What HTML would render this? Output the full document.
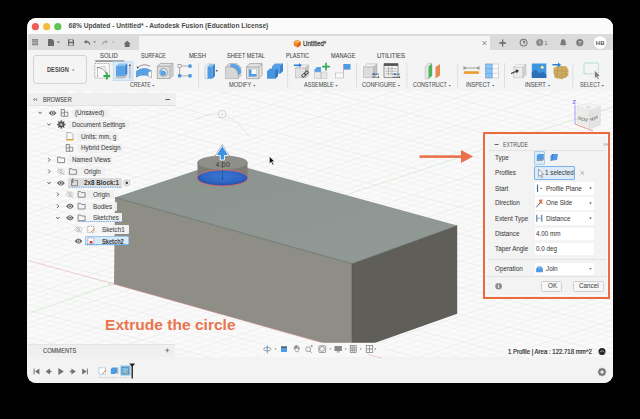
<!DOCTYPE html>
<html><head><meta charset="utf-8">
<style>
*{margin:0;padding:0;box-sizing:border-box}
html,body{width:640px;height:419px;overflow:hidden;background:#000;font-family:"Liberation Sans",sans-serif}
.a{position:absolute}
#win{position:absolute;left:27.4px;top:18.3px;width:585.2px;height:365px;border-radius:9px;overflow:hidden;background:#f3f3f3}
#pc{position:absolute;left:-27.4px;top:-18.3px;width:640px;height:419px}
.t{position:absolute;white-space:nowrap;line-height:1}
.lbl{font-size:6.3px;color:#4a4a4a;-webkit-text-stroke:0.08px #4a4a4a}
.grp{font-size:6.3px;color:#555;-webkit-text-stroke:0.08px #555}
.sep{position:absolute;top:63px;width:1px;height:25px;background:#dcdcdc}
.tree{font-size:6.2px;color:#333}
.pill{position:absolute;height:10px;background:rgba(238,238,238,0.85);border-radius:1px}
.pl{font-size:7px;color:#3d3d3d;-webkit-text-stroke:0.05px #3d3d3d;transform:scaleX(0.9);transform-origin:left}
.pp{font-size:7px;color:#3d3d3d;-webkit-text-stroke:0.05px #3d3d3d;transform:scaleX(0.9);transform-origin:left}
</style></head>
<body>
<div id="win"><div id="pc">

  <!-- TITLE -->
  <div class="a" style="left:28px;top:18px;width:585px;height:16px;background:#fbfbfb"></div>
  <div class="a" style="left:28px;top:34px;width:585px;height:16px;background:#dbdbdb"></div>
  <div class="a" style="left:139px;top:36.3px;width:350.5px;height:14px;background:#f4f4f4"></div>
  <div class="a" style="left:28px;top:50px;width:585px;height:41px;background:#f4f4f4"></div>
  <div class="t" style="left:68.5px;top:22.6px;font-size:6.66px;font-weight:bold;color:#4b4b4b">68% Updated - Untitled* - Autodesk Fusion (Education License)</div>
  <div class="t" style="left:302.6px;top:41px;font-size:6.6px;color:#505050;-webkit-text-stroke:0.3px #505050;transform:scaleX(0.93);transform-origin:left">Untitled*</div>
  <!-- toolbar tab labels -->
  <div class="t lbl" style="left:100.37px;top:52.9px;transform:scaleX(0.933);transform-origin:left">SOLID</div>
  <div class="t lbl" style="left:141.04px;top:52.9px;transform:scaleX(0.832);transform-origin:left">SURFACE</div>
  <div class="t lbl" style="left:188.54px;top:52.9px;transform:scaleX(0.928);transform-origin:left">MESH</div>
  <div class="t lbl" style="left:226.53px;top:52.9px;transform:scaleX(0.875);transform-origin:left">SHEET METAL</div>
  <div class="t lbl" style="left:286.31px;top:52.9px;transform:scaleX(0.881);transform-origin:left">PLASTIC</div>
  <div class="t lbl" style="left:331.30px;top:52.9px;transform:scaleX(0.894);transform-origin:left">MANAGE</div>
  <div class="t lbl" style="left:377.08px;top:52.9px;transform:scaleX(0.957);transform-origin:left">UTILITIES</div>
  <!-- group labels -->
  <div class="t grp" style="left:129.74px;top:82.2px;transform:scaleX(0.827);transform-origin:left">CREATE</div>
  <div class="t grp" style="left:228.64px;top:82.2px;transform:scaleX(0.913);transform-origin:left">MODIFY</div>
  <div class="t grp" style="left:303.80px;top:82.2px;transform:scaleX(0.878);transform-origin:left">ASSEMBLE</div>
  <div class="t grp" style="left:362.31px;top:82.2px;transform:scaleX(0.899);transform-origin:left">CONFIGURE</div>
  <div class="t grp" style="left:413.33px;top:82.2px;transform:scaleX(0.857);transform-origin:left">CONSTRUCT</div>
  <div class="t grp" style="left:466.30px;top:82.2px;transform:scaleX(0.88);transform-origin:left">INSPECT</div>
  <div class="t grp" style="left:525.39px;top:82.2px;transform:scaleX(0.902);transform-origin:left">INSERT</div>
  <div class="t grp" style="left:579.99px;top:82.2px;transform:scaleX(0.829);transform-origin:left">SELECT</div>
  <svg class="a" style="left:0;top:0" width="640" height="100"><g fill="#666"><path d="M152.0,84.9 L154.5,84.9 L153.2,86.4 Z"/><path d="M253.1,84.9 L255.6,84.9 L254.3,86.4 Z"/><path d="M335.3,84.9 L337.8,84.9 L336.6,86.4 Z"/><path d="M397.6,84.9 L400.1,84.9 L398.9,86.4 Z"/><path d="M448.5,84.9 L451.0,84.9 L449.8,86.4 Z"/><path d="M492.0,84.9 L494.5,84.9 L493.2,86.4 Z"/><path d="M547.8,84.9 L550.3,84.9 L549.0,86.4 Z"/><path d="M601.5,84.9 L604.0,84.9 L602.8,86.4 Z"/></g></svg>
  <!-- design button -->
  <div class="a" style="left:33.2px;top:55.3px;width:53.6px;height:29.2px;border:0.8px solid #d4d4d4;border-radius:3px;background:#f4f4f4"></div>
  <div class="t" style="left:46.8px;top:66.2px;font-size:7px;font-weight:bold;color:#4a4a4a;transform:scaleX(0.81);transform-origin:left">DESIGN</div>
  <svg class="a" style="left:0;top:0" width="100" height="100"><path d="M72.1,69.6 L74.3,69.6 L73.2,71 Z" fill="#666"/></svg>
  <svg class="a" style="left:0;top:0" width="640" height="100" viewBox="0 0 640 100">
    <!-- traffic lights -->
    <circle cx="35.4" cy="26.7" r="3.6" fill="#ec5f57"/>
    <circle cx="46.6" cy="26.7" r="3.6" fill="#f4bd3e"/>
    <circle cx="57.8" cy="26.7" r="3.6" fill="#5fc453"/>
    <!-- tabbar left icons -->
    <g fill="#6a6a6a">
      <rect x="32.2" y="39.2" width="5.8" height="6"/><path d="M32,40.8 L38.2,40.8 M32,42.3 L38.2,42.3 M32,43.8 L38.2,43.8" stroke="#dbdbdb" stroke-width="0.6"/><path d="M34.1,39 L34.1,45.4 M36.1,39 L36.1,45.4" stroke="#dbdbdb" stroke-width="0.3"/>
      <path d="M48,39 L52,39 L54,41 L54,46 L48,46 Z"/>
      <path d="M56.8,41.4 L59.8,41.4 L58.3,43.2 Z"/>
      <path d="M68,39.2 L73,39.2 L74,40.2 L74,45.8 L68,45.8 Z M69.4,39.8 L69.4,41.8 L72.6,41.8 L72.6,39.8 Z M69.2,43.2 L69.2,45.2 L72.8,45.2 L72.8,43.2 Z" fill-rule="evenodd"/>
      <path d="M123.8,43.8 L127.2,40.8 L130.6,43.8 L129.6,43.8 L129.6,47 L124.8,47 L124.8,43.8 Z"/>
    </g>
    <path d="M85.5,41.8 Q88.5,40.8 90,44.6" fill="none" stroke="#6a6a6a" stroke-width="1.1"/>
    <path d="M83.6,42.2 L86.6,39.8 L86.8,43.4 Z" fill="#6a6a6a"/>
    <path d="M93.3,41.4 L96.1,41.4 L94.7,43.1 Z" fill="#6a6a6a"/>
    <path d="M102,44.6 Q103.5,40.8 106.5,41.8" fill="none" stroke="#a9a9a9" stroke-width="1.1"/>
    <path d="M108.4,42.2 L105.4,39.8 L105.2,43.4 Z" fill="#a9a9a9"/>
    <path d="M111.7,41.4 L114.5,41.4 L113.1,43.1 Z" fill="#a9a9a9"/>
    <!-- tab cube -->
    <path d="M297.2,39.8 L300.6,41.6 L300.6,45.6 L297.2,47.4 L293.8,45.6 L293.8,41.6 Z" fill="#f08a2a"/>
    <path d="M297.2,43.4 L300.6,41.6 L300.6,45.6 L297.2,47.4 Z" fill="#d8661a"/>
    <path d="M297.2,39.8 L300.6,41.6 L297.2,43.4 L293.8,41.6 Z" fill="#f7ad5e"/>
    <!-- close x -->
    <path d="M482.6,41.2 L486.4,45 M486.4,41.2 L482.6,45" stroke="#666" stroke-width="0.8"/>
    <!-- right icons -->
    <path d="M502.6,39.6 L502.6,46.4 M499.2,43 L506,43" stroke="#666" stroke-width="1.3"/>
    <circle cx="523.6" cy="42.6" r="3.4" fill="none" stroke="#777" stroke-width="1.1"/>
    <path d="M522.5,40.6 L525.5,41 L524,44.6 Z" fill="#777"/>
    <circle cx="539.7" cy="42.6" r="3.5" fill="#8a8a8a"/>
    <path d="M539.7,40.6 L539.7,42.8 L541.4,43.6" fill="none" stroke="#dbdbdb" stroke-width="0.8"/>
    <path d="M563.2,39 Q560.6,39.4 560.8,43 L560,45 L566.4,45 L565.6,43 Q565.8,39.4 563.2,39 Z M562.3,45.5 L564.1,45.5 L563.2,46.6 Z" fill="#7a7a7a"/>
    <circle cx="579.8" cy="42.6" r="3.6" fill="#7a7a7a"/>
    <text x="579.8" y="44.9" font-size="5.6" font-weight="bold" fill="#dbdbdb" text-anchor="middle" font-family="Liberation Sans">?</text>
    <circle cx="600.1" cy="42.5" r="6.3" fill="#fff"/>
    <text x="600.2" y="44.7" font-size="6" font-weight="bold" fill="#555" text-anchor="middle" font-family="Liberation Sans">HB</text>
    <text x="544.2" y="44.8" font-size="6.2" fill="#777" font-family="Liberation Sans">1</text>
    <!-- SOLID underline -->
    <rect x="95.2" y="60.6" width="29.2" height="0.9" fill="#3a3a3a"/>
    <!-- separators -->
    <g fill="#d9d9d9">
      <rect x="198.3" y="63" width="0.8" height="24.5"/><rect x="287.3" y="63" width="0.8" height="24.5"/>
      <rect x="356" y="63" width="0.8" height="24.5"/><rect x="406.5" y="63" width="0.8" height="24.5"/>
      <rect x="457.3" y="63" width="0.8" height="24.5"/><rect x="504.2" y="63" width="0.8" height="24.5"/>
      <rect x="572.4" y="63" width="0.8" height="24.5"/>
    </g>
    <!-- CREATE icons -->
    <rect x="113.2" y="61.8" width="19.8" height="18.9" fill="#dbe9f6" stroke="#b4d3ee" stroke-width="0.6"/>
    <path d="M94.8,63.5 L109.3,63.5 L109.3,78 L94.8,78 Z" fill="#fafafa" stroke="#666" stroke-width="0.5" stroke-dasharray="1.4,0.8"/>
    <path d="M97.5,76 L97.5,67.5 L105,66.5 L106.5,74" fill="none" stroke="#888" stroke-width="0.45"/>
    <path d="M97.5,67.5 Q104,68 106.5,74" fill="none" stroke="#666" stroke-width="0.6"/>
    <circle cx="97.5" cy="67.5" r="0.6" fill="#666"/><circle cx="106.5" cy="74" r="0.6" fill="#666"/><circle cx="97.5" cy="76" r="0.6" fill="#666"/>
    <path d="M106.8,72.6 L106.8,79.4 M103.4,76 L110.2,76" stroke="#2fa84f" stroke-width="1.9"/>
    <path d="M116,66 L118.8,63.4 L127.3,63.4 L124.5,66 Z" fill="#8cc4f2"/>
    <path d="M116,66 L124.5,66 L124.5,76.2 L116,76.2 Z" fill="#5aa2e6"/>
    <path d="M124.5,66 L127.3,63.4 L127.3,73.6 L124.5,76.2 Z" fill="#3f86cf"/>
    <path d="M116,76.2 L124.5,76.2 L127.3,73.6 L127.3,75.6 L124.5,78.3 L116,78.3 Z" fill="#b9b9b9"/>
    <path d="M129.9,64.5 L129.9,78.5" stroke="#444" stroke-width="0.4"/>
    <path d="M129,66 L129.9,64 L130.8,66 Z" fill="#444"/>
    <path d="M136,71 Q143.5,65.5 151.5,70.5 L151.5,76.5 Q143.5,71.5 136,76.5 Z" fill="#5aa2e6"/>
    <path d="M136,76.5 Q143.5,71.5 151.5,76.5 L151.5,77.6 Q143.5,73 136,77.6 Z" fill="#3a80c8"/>
    <path d="M148.2,72.2 L151.5,70.5 L151.5,77.6 L148.2,76.5 Z" fill="#fff" stroke="#777" stroke-width="0.4"/>
    <path d="M137.5,67.6 Q143.5,62.8 150,66.2" fill="none" stroke="#444" stroke-width="0.55"/>
    <path d="M136.6,66.4 L137.2,68.8 L139,67.2 Z" fill="#444"/>
    <path d="M157.3,66.3 L160.5,63.4 L173,63.4 L173,75.5 L170,78.5 L157.3,78.5 Z" fill="#dedede" stroke="#777" stroke-width="0.5"/>
    <path d="M157.3,66.3 L170,66.3 L173,63.4 M170,66.3 L170,78.5" fill="none" stroke="#777" stroke-width="0.5"/>
    <path d="M170,66.3 L173,63.4 L173,75.5 L170,78.5 Z" fill="#c8c8c8"/>
    <circle cx="163.6" cy="72.4" r="4" fill="#f6f6f6" stroke="#555" stroke-width="0.5"/>
    <circle cx="163.2" cy="72.8" r="3" fill="#5aa2e6"/>
    <path d="M162.5,70.5 Q165.5,69.5 166.3,72.5" fill="none" stroke="#fff" stroke-width="0.7"/>
    <path d="M181,66 L188.5,66 M179.6,67.5 L179.6,74.3 M181,75.8 L188.5,75.8" stroke="#666" stroke-width="0.5"/>
    <rect x="178" y="64.5" width="3" height="3" fill="#fff" stroke="#666" stroke-width="0.5"/>
    <rect x="188.4" y="64.5" width="3.2" height="3.2" fill="#3f8fdc"/>
    <rect x="178" y="74.2" width="3.2" height="3.2" fill="#3f8fdc"/>
    <rect x="188.4" y="74.2" width="3.2" height="3.2" fill="#3f8fdc"/>
    <!-- MODIFY -->
    <path d="M205,66.5 L207.5,63.8 L210,63.8 L210,76 L207.5,78.8 L205,78.8 Z" fill="#f0f0f0" stroke="#999" stroke-width="0.4"/>
    <path d="M207.5,66.5 L210,63.8 L215,63.8 L212.5,66.5 Z" fill="#8cc4f2"/>
    <path d="M207.5,66.5 L212.5,66.5 L212.5,78.8 L207.5,78.8 Z" fill="#4f9ae4"/>
    <path d="M212.5,66.5 L215,63.8 L215,76 L212.5,78.8 Z" fill="#3a80c8"/>
    <path d="M214,70.8 L216.5,70.8" stroke="#aaa" stroke-width="0.6"/>
    <path d="M216.3,69.8 L218.2,70.8 L216.3,71.8 Z" fill="#333"/>
    <path d="M225.5,67 L229,63.6 L237,63.6 L241,67.5 L241,75.5 L238,78.6 L225.5,78.6 Z" fill="#d6d6d6" stroke="#888" stroke-width="0.4"/>
    <path d="M231.5,63.6 Q240.5,63.8 241.2,72.5 L238.4,75.8 Q238,67.5 229.5,66.8 Z" fill="#5aa2e6"/>
    <path d="M225.5,67 L229.5,66.8 Q238,67.5 238.4,75.8 L238,78.6" fill="none" stroke="#888" stroke-width="0.4"/>
    <path d="M246.5,67 L249.8,63.6 L262,63.6 L262,75.5 L258.8,78.6 L246.5,78.6 Z" fill="#e4e4e4" stroke="#777" stroke-width="0.5"/>
    <path d="M246.5,67 L258.8,67 L262,63.6 M258.8,67 L258.8,78.6" fill="none" stroke="#777" stroke-width="0.5"/>
    <rect x="248.5" y="69" width="8.3" height="7.8" fill="#fafafa" stroke="#999" stroke-width="0.4"/>
    <path d="M249,69.5 L251.5,69.5 L251.5,74 L256.5,74 L256.5,76.5 L249,76.5 Z" fill="#4f9ae4"/>
    <path d="M272,66.2 L275,63.4 L283,63.4 L283,71 L280,73.8 L272,73.8 Z" fill="#5aa2e6"/>
    <path d="M280,66.2 L283,63.4 L283,71 L280,73.8 Z" fill="#3a86d4"/>
    <path d="M267,71.2 L270,68.4 L278,68.4 L278,76 L275,78.8 L267,78.8 Z" fill="#4a95e0"/>
    <path d="M275,71.2 L278,68.4 L278,76 L275,78.8 Z" fill="#3478c0"/>
    <!-- ASSEMBLE -->
    <path d="M295.5,68 L298.5,65 L308.5,65 L305.5,68 Z" fill="#f2f2f2" stroke="#999" stroke-width="0.4"/>
    <path d="M295.5,68 L305.5,68 L305.5,77.8 L295.5,77.8 Z" fill="#e2e2e2" stroke="#999" stroke-width="0.4"/>
    <path d="M305.5,68 L308.5,65 L308.5,75 L305.5,77.8 Z" fill="#cacaca" stroke="#999" stroke-width="0.4"/>
    <path d="M293.8,65.2 L299.5,65.2" stroke="#2b7fd6" stroke-width="1.5"/>
    <path d="M299,63 L301.8,65.2 L299,67.4 Z" fill="#2b7fd6"/>
    <g fill="none" stroke="#222" stroke-width="0.8">
      <rect x="301.6" y="74" width="4" height="2.6" rx="1.3" transform="rotate(-40 303.6 75.3)"/>
      <rect x="304.4" y="71.5" width="4" height="2.6" rx="1.3" transform="rotate(-40 306.4 72.8)"/>
    </g>
    <path d="M314.5,69.5 L317,67 L321,67 L321,72 L314.5,72 Z" fill="#5aa2e6"/>
    <path d="M314.5,72 L321,72 L321,78.5 L314.5,78.5 Z M321,72 L327,72 L327,78.5 L321,78.5 Z" fill="#e8e8e8" stroke="#aaa" stroke-width="0.4"/>
    <path d="M326,62.8 L326,70.4 M322.2,66.6 L329.8,66.6" stroke="#2fa84f" stroke-width="1.6"/>
    <rect x="343.5" y="64" width="7" height="5.6" fill="#4f9ae4"/>
    <path d="M343.5,64 L343.5,78" stroke="#e07a8a" stroke-width="0.6"/>
    <rect x="335.8" y="73" width="7.7" height="5" fill="#fafafa" stroke="#999" stroke-width="0.4"/>
    <!-- CONFIGURE -->
    <path d="M363.5,67 L366.8,63.8 L377,63.8 L373.8,67 Z" fill="#f0f0f0" stroke="#999" stroke-width="0.4"/>
    <path d="M363.5,67 L373.8,67 L373.8,77.5 L363.5,77.5 Z" fill="#dcdcdc" stroke="#999" stroke-width="0.4"/>
    <path d="M373.8,67 L377,63.8 L377,74.3 L373.8,77.5 Z" fill="#c4c4c4" stroke="#999" stroke-width="0.4"/>
    <path d="M372,74.2 L379,74.2 M372,77.2 L379,77.2" stroke="#444" stroke-width="0.7"/>
    <path d="M378,76.2 L379.5,77.2 L378,78.2 Z" fill="#444"/>
    <circle cx="373.8" cy="74.2" r="1.1" fill="#2b7fd6"/>
    <path d="M384,63.5 L398,63.5 L398,77.5 L384,77.5 Z" fill="#f2f2f2" stroke="#555" stroke-width="0.6"/>
    <rect x="384" y="63.5" width="14" height="2.4" fill="#555"/>
    <path d="M385.5,68.7 L396.5,68.7 M385.5,71.2 L396.5,71.2 M385.5,73.7 L392,73.7 M388.5,66.5 L388.5,76 M392,66.5 L392,76" stroke="#888" stroke-width="0.5"/>
    <path d="M392.5,74.2 L400,74.2 M392.5,77.2 L400,77.2" stroke="#444" stroke-width="0.7"/>
    <path d="M399,76.2 L400.5,77.2 L399,78.2 Z" fill="#444"/>
    <circle cx="395" cy="74.2" r="1.1" fill="#2b7fd6"/>
    <!-- CONSTRUCT -->
    <path d="M425.2,66.5 L428.5,63.4 L432,63.4 L432,75.8 L428.5,78.8 L425.2,78.8 Z" fill="#e6e6e6" stroke="#999" stroke-width="0.4"/>
    <path d="M428.5,66.5 L432,63.4 L432,75.8 L428.5,78.8 Z" fill="#4cb35a"/>
    <path d="M435.5,67 L440,64 L440,75.5 L435.5,78.5 Z" fill="#e58a50"/>
    <!-- INSPECT -->
    <path d="M464.5,68 L478.5,68" stroke="#444" stroke-width="0.5"/>
    <path d="M464,66.3 L464,69.7 M479,66.3 L479,69.7" stroke="#444" stroke-width="0.6"/>
    <path d="M466,67 L464.6,68 L466,69 M477,67 L478.4,68 L477,69" fill="none" stroke="#444" stroke-width="0.4"/>
    <rect x="463.8" y="71.3" width="15.2" height="2.6" fill="#f0a030"/>
    <path d="M466,71.3 L466,72.3 M468.5,71.3 L468.5,72.3 M471,71.3 L471,72.3 M473.5,71.3 L473.5,72.3 M476,71.3 L476,72.3" stroke="#8a5a10" stroke-width="0.35"/>
    <rect x="485.6" y="64" width="13.2" height="14" fill="#fafafa" stroke="#aaa" stroke-width="0.4"/>
    <path d="M485.6,68.7 L498.8,68.7 M485.6,73.4 L498.8,73.4 M492.2,64 L492.2,78" stroke="#aaa" stroke-width="0.4"/>
    <rect x="485.6" y="64" width="6.6" height="14" fill="#8cc4f2" stroke="#3f8fdc" stroke-width="0.6" stroke-dasharray="1,0.5"/>
    <path d="M485.6,68.7 L492.2,68.7 M485.6,73.4 L492.2,73.4" stroke="#3f8fdc" stroke-width="0.4"/>
    <!-- INSERT -->
    <path d="M513.5,67.2 L516.5,64.4 L526,64.4 L523,67.2 Z" fill="#f8f8f8" stroke="#aaa" stroke-width="0.4"/>
    <path d="M513.5,67.2 L523,67.2 L523,77.6 L513.5,77.6 Z" fill="#ececec" stroke="#aaa" stroke-width="0.4"/>
    <path d="M523,67.2 L526,64.4 L526,74.8 L523,77.6 Z" fill="#d4d4d4" stroke="#aaa" stroke-width="0.4"/>
    <path d="M511,73.5 L516.5,71.2" stroke="#333" stroke-width="1.2"/>
    <path d="M515.5,69.2 L519,70.6 L516.7,73.4 Z" fill="#333"/>
    <rect x="531.8" y="63.5" width="14.5" height="14.5" fill="#3f95e0"/>
    <path d="M531.8,78 L531.8,72.5 L535.5,69.5 L539.5,73.5 L542.5,71.5 L546.3,74.5 L546.3,78 Z" fill="#2a6fb8"/>
    <circle cx="542.2" cy="67.2" r="1.5" fill="#f6f0a0"/>
    <path d="M553.5,68 L559,65.6 L566.5,66.5 L568.5,70 L568.3,76 L562,79.3 L555,78 L553.5,73 Z" fill="#cfae63"/>
    <path d="M554,70.5 L568,71.5 M554,73.5 L568,74.5 M554.5,76 L566,77 M557.5,66 L557,78.5 M562,66 L562,79 M565.5,66.5 L565.5,78" stroke="#a8884a" stroke-width="0.4"/>
    <path d="M552.5,64.8 L558.5,64.8" stroke="#2b7fd6" stroke-width="1.6"/>
    <path d="M558,62.4 L561,64.8 L558,67.2 Z" fill="#2b7fd6"/>
    <!-- SELECT -->
    <rect x="584" y="63" width="14.3" height="10.8" fill="none" stroke="#5cc06c" stroke-width="0.6" stroke-dasharray="1.2,0.9"/>
    <path d="M594.8,70.5 L594.8,78.3 L596.6,76.8 L598,79.5 L599.1,79 L597.8,76.3 L600,76.1 Z" fill="#777" stroke="#eee" stroke-width="0.4"/>
  </svg>
  <!-- VIEWPORT -->
  <div class="a" style="left:28px;top:91px;width:585px;height:266px;background:#fafafa;overflow:hidden">
    <svg class="a" style="left:-28px;top:-91px" width="640" height="419" viewBox="0 0 640 419">
      <defs>
        <pattern id="gA" patternUnits="userSpaceOnUse" width="640" height="26" patternTransform="translate(0,3) rotate(-18.45)">
          <rect x="0" y="0" width="640" height="0.6" fill="#e6e6e6"/><rect x="0" y="5.2" width="640" height="0.55" fill="#ededed"/><rect x="0" y="10.4" width="640" height="0.55" fill="#ededed"/><rect x="0" y="15.6" width="640" height="0.55" fill="#ededed"/><rect x="0" y="20.8" width="640" height="0.55" fill="#ededed"/>
        </pattern>
        <pattern id="gB" patternUnits="userSpaceOnUse" width="640" height="26" patternTransform="translate(0,7) rotate(14.5)">
          <rect x="0" y="0" width="640" height="0.6" fill="#e6e6e6"/><rect x="0" y="5.2" width="640" height="0.55" fill="#ededed"/><rect x="0" y="10.4" width="640" height="0.55" fill="#ededed"/><rect x="0" y="15.6" width="640" height="0.55" fill="#ededed"/><rect x="0" y="20.8" width="640" height="0.55" fill="#ededed"/>
        </pattern>
        <linearGradient id="topG" x1="0" y1="0" x2="1" y2="1">
          <stop offset="0" stop-color="#8a938e"/><stop offset="1" stop-color="#919a96"/>
        </linearGradient>
        <radialGradient id="blueG" cx="0.5" cy="0.4" r="0.55">
          <stop offset="0" stop-color="#3a74d2"/><stop offset="0.7" stop-color="#2f66c4"/><stop offset="1" stop-color="#2553a8"/>
        </radialGradient>
      </defs>
      <rect x="0" y="0" width="640" height="419" fill="url(#gA)"/>
      <rect x="0" y="0" width="640" height="419" fill="url(#gB)"/>
      <!-- axes -->
      <line x1="300" y1="210" x2="613" y2="106.9" stroke="#d2eccc" stroke-width="0.6"/>
      <line x1="28" y1="260.4" x2="114" y2="284" stroke="#eab4b4" stroke-width="0.6"/>
      <line x1="28" y1="314" x2="112" y2="284" stroke="#c4e8bc" stroke-width="0.6"/>
      <!-- viewcube -->
      <line x1="575" y1="104.5" x2="575" y2="124" stroke="#8888ff" stroke-width="0.8"/>
      <line x1="575" y1="124" x2="593" y2="131" stroke="#e07070" stroke-width="0.7"/>
      <path d="M577,106.2 L589,103.4 L600.5,106.5 L589.5,111 Z" fill="#f4f4f4" stroke="#dcdcdc" stroke-width="0.4"/>
      <path d="M577,106.2 L589.5,111 L589.5,129.2 L577,122.3 Z" fill="#ececec" stroke="#d8d8d8" stroke-width="0.4"/>
      <path d="M589.5,111 L600.5,106.5 L600.5,124.8 L589.5,129.2 Z" fill="#e4e4e4" stroke="#d4d4d4" stroke-width="0.4"/>
      <rect x="586.5" y="106" width="4" height="2.5" fill="#e0e0e0"/>
      <text x="577.6" y="119.6" font-size="4.6" fill="#7a7a7a" font-family="Liberation Sans" transform="rotate(14 577.6 119.6) scale(1,1)" textLength="10.5">FRONT</text>
      <text x="590.8" y="121.5" font-size="4.4" fill="#7a7a7a" font-family="Liberation Sans" transform="rotate(-24 590.8 121.5)" textLength="9">RIGHT</text>
      <line x1="570" y1="121.7" x2="613" y2="107.3" stroke="#c4e8bc" stroke-width="0.5" opacity="0.8"/>
      <text x="572.6" y="103.6" font-size="5.6" font-weight="bold" fill="#7070f0" font-family="Liberation Sans">Z</text>
      <!-- block -->
      <polygon points="115,197.5 352,263.7 352,351 114,284" fill="#8e8d86"/>
      <polygon points="352,263.7 457.2,225.6 457.2,313.8 352,351" fill="#5f5e58"/>
      <polygon points="115,197.5 223.5,161.3 457.2,225.6 352,263.7" fill="url(#topG)"/>
      <polyline points="115,197.5 352,263.7 457.2,225.6" fill="none" stroke="#5d6762" stroke-width="0.7"/>
      <line x1="352" y1="263" x2="352" y2="351" stroke="#585852" stroke-width="0.6"/>
      <line x1="114" y1="284" x2="352" y2="351" stroke="#c98a8a" stroke-width="0.6"/>
      <ellipse cx="111.5" cy="284" rx="2.6" ry="1.3" fill="#f4f4f4" stroke="#aaa" stroke-width="0.4"/>
      <!-- cylinder -->
      <path d="M197.5,162.8 L197.5,178 A25,8 0 0 0 247.5,178 L247.5,162.8 Z" fill="#7c7c75"/>
      <ellipse cx="222.5" cy="162.8" rx="25" ry="7" fill="#8f8f89" stroke="#74746e" stroke-width="0.4"/>
      <ellipse cx="222.5" cy="177.9" rx="25.4" ry="8" fill="url(#blueG)" stroke="#e06a6a" stroke-width="0.9"/>
      <line x1="222.5" y1="170" x2="222.5" y2="178" stroke="#1f4a90" stroke-width="0.6"/><circle cx="222.5" cy="178.5" r="0.9" fill="#1f4a90"/><line x1="222.3" y1="161.5" x2="222.3" y2="168" stroke="#222" stroke-width="0.5"/>
      <!-- manipulator arc -->
      <path d="M195.5,120 Q208,113 218,114" fill="none" stroke="#d8d8d8" stroke-width="0.6"/>
      <path d="M226,116 Q240,122 249,136" fill="none" stroke="#d8d8d8" stroke-width="0.6"/>
      <circle cx="222.2" cy="114.2" r="3.8" fill="none" stroke="#c8c8c8" stroke-width="0.8"/>
      <circle cx="222.2" cy="114.2" r="0.5" fill="#888"/>
      <!-- arrow -->
      <path d="M222.3,145.6 L228.6,155.5 L224.4,155.5 L224.4,160 L220.2,160 L220.2,155.5 L216,155.5 Z" fill="none" stroke="#8a8a8a" stroke-width="1.6" stroke-linejoin="miter"/><path d="M222.3,145.6 L228.6,155.5 L224.4,155.5 L224.4,160 L220.2,160 L220.2,155.5 L216,155.5 Z" fill="#3b90e2" stroke="#fff" stroke-width="0.9" stroke-linejoin="miter"/>
      <!-- cursor -->
      <path d="M269.5,156.5 L269.5,163.5 L271.2,162 L272.6,165 L273.6,164.5 L272.3,161.6 L274.5,161.5 Z" fill="#111" stroke="#fff" stroke-width="0.4"/>
      <!-- orange arrow -->
      <rect x="419.5" y="155.3" width="43" height="2.6" fill="#e9724b"/>
      <path d="M461,150 L473,156.6 L461,163 Z" fill="#e9724b"/>
    </svg>
    <div class="t" style="left:187.6px;top:70.2px;font-size:7px;color:#3a3a3a;letter-spacing:0.2px">4.00</div>
  </div>

  <!-- BROWSER -->
  <div class="a" style="left:28px;top:93.2px;width:147.5px;height:12.4px;background:#efefef;border-bottom:0.5px solid #e2e2e2"></div>
  <div class="t" style="left:43.2px;top:96.8px;font-size:6.3px;color:#4a4a4a;-webkit-text-stroke:0.1px #4a4a4a;transform:scaleX(0.88);transform-origin:left">BROWSER</div>
  <!-- pills -->
  <div class="pill" style="left:72px;top:108.5px;width:37px;height:9px"></div>
  <div class="pill" style="left:68px;top:120.2px;width:61px;height:9px"></div>
  <div class="pill" style="left:77px;top:131.9px;width:42px;height:9px"></div>
  <div class="pill" style="left:77px;top:143.6px;width:46px;height:9px"></div>
  <div class="pill" style="left:68px;top:155.3px;width:44px;height:9px"></div>
  <div class="pill" style="left:68.4px;top:167px;width:36.5px;height:9px"></div>
  <div class="pill" style="left:68.4px;top:178.2px;width:53.3px;height:9.2px;background:rgba(218,218,218,0.95)"></div>
  <div class="pill" style="left:77px;top:190px;width:37px;height:9px"></div>
  <div class="pill" style="left:77px;top:201.7px;width:39.5px;height:9px;background:rgba(242,242,242,0.92)"></div>
  <div class="pill" style="left:77px;top:213.4px;width:45.2px;height:9px;background:rgba(244,244,244,0.95)"></div>
  <div class="pill" style="left:86.2px;top:225.1px;width:43px;height:9px;background:rgba(244,244,244,0.97)"></div>
  <div class="pill" style="left:85px;top:236.4px;width:44.2px;height:8.7px;background:#d6e9f9;border:0.6px solid #9cc8ee"></div>
  <svg class="a" style="left:0;top:0" width="640" height="260" viewBox="0 0 640 260">
    <path d="M33.4,99.5 L35,98.5 M33.4,99.5 L35,100.5 M35.6,99.5 L37.2,98.5 M35.6,99.5 L37.2,100.5" stroke="#555" stroke-width="0.7" fill="none"/>
    <rect x="165.5" y="99" width="4.4" height="1" fill="#555"/>
    <g fill="none" stroke="#4a4a4a" stroke-width="0.9">
      <path d="M38.6,111.8 L40.2,113.6 L41.8,111.8"/>
      <path d="M47.4,123.5 L49,125.3 L50.6,123.5"/>
      <path d="M48.3,158 L50,159.8 L48.3,161.6"/>
      <path d="M48.3,169.7 L50,171.5 L48.3,173.3"/>
      <path d="M47.4,182 L49,183.8 L50.6,182"/>
      <path d="M57,192.6 L58.7,194.4 L57,196.2"/>
      <path d="M57,204.4 L58.7,206.2 L57,208"/>
      <path d="M56.2,217 L57.8,218.8 L59.4,217"/>
    </g>
    <!-- eyes -->
    <g><path d="M48.7,113 Q52.6,107.8 56.5,113 Q52.6,118.2 48.7,113 Z" fill="#666"/><circle cx="52.6" cy="113" r="1.7" fill="#e8e8e8"/><circle cx="52.6" cy="113" r="0.95" fill="#666"/><path d="M57.0,183 Q60.9,177.8 64.8,183 Q60.9,188.2 57.0,183 Z" fill="#666"/><circle cx="60.9" cy="183" r="1.7" fill="#e8e8e8"/><circle cx="60.9" cy="183" r="0.95" fill="#666"/><path d="M66.1,206.2 Q70.0,201.0 73.9,206.2 Q70.0,211.4 66.1,206.2 Z" fill="#666"/><circle cx="70" cy="206.2" r="1.7" fill="#e8e8e8"/><circle cx="70" cy="206.2" r="0.95" fill="#666"/><path d="M66.1,217.8 Q70.0,212.6 73.9,217.8 Q70.0,223.0 66.1,217.8 Z" fill="#666"/><circle cx="70" cy="217.8" r="1.7" fill="#e8e8e8"/><circle cx="70" cy="217.8" r="0.95" fill="#666"/><path d="M74.6,241.1 Q78.5,235.9 82.4,241.1 Q78.5,246.3 74.6,241.1 Z" fill="#666"/><circle cx="78.5" cy="241.1" r="1.7" fill="#e8e8e8"/><circle cx="78.5" cy="241.1" r="0.95" fill="#666"/></g>
    <g fill="none" stroke="#aaa" stroke-width="0.6">
      <path d="M57,171.5 Q60.9,166.5 64.8,171.5 Q60.9,176.5 57,171.5 Z M57.6,168 L64.2,175"/><circle cx="60.9" cy="171.5" r="1.2"/>
      <path d="M66.1,194.4 Q70,189.4 73.9,194.4 Q70,199.4 66.1,194.4 Z M66.7,190.9 L73.3,197.9"/><circle cx="70" cy="194.4" r="1.2"/>
      <path d="M74.6,229.5 Q78.5,224.5 82.4,229.5 Q78.5,234.5 74.6,229.5 Z M75.2,226 L81.8,233"/><circle cx="78.5" cy="229.5" r="1.2"/>
    </g>
    <!-- folders -->
    <g fill="none" stroke="#6a6a6a" stroke-width="0.75">
      <path d="M57.6,157 L60.2,157 L61,158 L64.6,158 L64.6,162.6 L57.6,162.6 Z"/>
      <path d="M69.4,168.7 L72,168.7 L72.8,169.7 L76.4,169.7 L76.4,174.3 L69.4,174.3 Z"/>
      <path d="M78.1,191.6 L80.7,191.6 L81.5,192.6 L85.1,192.6 L85.1,197.2 L78.1,197.2 Z"/>
      <path d="M78.1,203.4 L80.7,203.4 L81.5,204.4 L85.1,204.4 L85.1,209 L78.1,209 Z"/>
      <path d="M78.1,215 L80.7,215 L81.5,216 L85.1,216 L85.1,220.6 L78.1,220.6 Z"/>
      <path d="M61.2,109.5 L64.4,109.5 L64.4,116.3 L61.2,116.3 Z M61.2,112.9 L64.4,112.9 M64.4,112.2 L67.8,112.2 L67.8,116.3 L64.4,116.3"/>
      <path d="M66.2,144.5 L69.4,144.5 L69.4,151.3 L66.2,151.3 Z M66.2,147.9 L69.4,147.9 M69.4,147.2 L72.8,147.2 L72.8,151.3 L69.4,151.3"/>
    </g>
    <!-- gear -->
    <circle cx="61.3" cy="124.5" r="2.9" fill="#555"/>
    <g stroke="#555" stroke-width="1.3"><path d="M61.3,120.3 L61.3,128.7 M57.1,124.5 L65.5,124.5 M58.3,121.5 L64.3,127.5 M64.3,121.5 L58.3,127.5"/></g>
    <circle cx="61.3" cy="124.5" r="1.1" fill="#eee"/>
    <!-- units doc -->
    <path d="M66.8,132.5 L71,132.5 L73,134.5 L73,139.5 L66.8,139.5 Z" fill="#f8f8f8" stroke="#777" stroke-width="0.5"/>
    <rect x="66.3" y="139.2" width="7.2" height="1.3" fill="#e0a020"/>
    <!-- component icon block -->
    <path d="M71.5,179.5 L71.5,185.7 L77.5,185.7 L77.5,180.5 L74.5,180.5" fill="none" stroke="#555" stroke-width="0.6"/>
    <path d="M72.8,178.4 L72.8,183" stroke="#333" stroke-width="0.8"/>
    <circle cx="126.8" cy="182.9" r="3" fill="#f4f4f4" stroke="#999" stroke-width="0.5"/>
    <circle cx="126.8" cy="182.9" r="1.3" fill="#444"/>
    <!-- sketch icons -->
    <rect x="87.8" y="226.3" width="6" height="6" fill="#fff" stroke="#555" stroke-width="0.5" stroke-dasharray="1,0.6"/>
    <path d="M91,232 L94.5,228.5" stroke="#e69020" stroke-width="1"/>
    <rect x="87.8" y="237.9" width="6" height="6" fill="#fff" stroke="#555" stroke-width="0.5" stroke-dasharray="1,0.6"/>
    <rect x="89.8" y="241" width="2.6" height="2.4" fill="#d03030"/>
    <!-- dotted underlines -->
    <path d="M68.4,187.3 L121.7,187.3" stroke="#3a8ee0" stroke-width="0.8" stroke-dasharray="1,0.8"/>
    <path d="M77.5,221.5 L122.2,221.5" stroke="#3a8ee0" stroke-width="0.8" stroke-dasharray="1,0.8"/>
    <path d="M85.2,244.8 L129,244.8" stroke="#3a8ee0" stroke-width="0.8" stroke-dasharray="1,0.8"/>
  </svg>
  <div class="t pl" style="left:75.3px;top:109.3px">(Unsaved)</div>
  <div class="t pl" style="left:72.2px;top:121.0px">Document Settings</div>
  <div class="t pl" style="left:80.8px;top:132.7px">Units: mm, g</div>
  <div class="t pl" style="left:80.8px;top:144.4px">Hybrid Design</div>
  <div class="t pl" style="left:72.2px;top:156.1px">Named Views</div>
  <div class="t pl" style="left:84.2px;top:167.8px">Origin</div>
  <div class="t pl" style="left:84.2px;top:179.3px;font-weight:bold">2x8 Block:1</div>
  <div class="t pl" style="left:92.7px;top:190.9px">Origin</div>
  <div class="t pl" style="left:92.7px;top:202.6px">Bodies</div>
  <div class="t pl" style="left:92.7px;top:214.2px">Sketches</div>
  <div class="t pl" style="left:101.9px;top:225.9px">Sketch1</div>
  <div class="t pl" style="left:101.9px;top:237.5px;font-weight:bold;transform:scaleX(0.81);transform-origin:left">Sketch2</div>

  <!-- EXTRUDE PANEL -->
  <div class="a" style="left:482.8px;top:132px;width:127.4px;height:166.6px;border:2.5px solid #ec6b3c;background:#f3f3f3"></div>
  <div class="a" style="left:485.5px;top:134.5px;width:122px;height:161.5px;border:0.8px solid #fafafa"></div>
  <div class="a" style="left:489px;top:150.2px;width:117px;height:0.6px;background:#e4e4e4"></div>
  <div class="a" style="left:489px;top:258.6px;width:117px;height:0.6px;background:#e2e2e2"></div>
  <div class="a" style="left:486px;top:276.3px;width:121px;height:0.6px;background:#e2e2e2"></div>
  <div class="a" style="left:534.3px;top:151.3px;width:11.2px;height:13.4px;background:#dcebf7;border:0.6px solid #a9cdee;border-radius:1px"></div>
  <div class="a" style="left:534.3px;top:166.4px;width:40.5px;height:13.3px;background:#dcebf7;border:0.7px solid #7ab3e6;border-radius:1px"></div>
  <div class="a" style="left:534.6px;top:181.7px;width:59.4px;height:13.1px;background:#fff"></div>
  <div class="a" style="left:534.6px;top:196.8px;width:59.4px;height:13px;background:#fff"></div>
  <div class="a" style="left:534.6px;top:211.8px;width:59.4px;height:13px;background:#fff"></div>
  <div class="a" style="left:534.6px;top:227.8px;width:59.4px;height:12px;background:#fff"></div>
  <div class="a" style="left:534.6px;top:242.8px;width:59.4px;height:12px;background:#fff"></div>
  <div class="a" style="left:534.6px;top:262.9px;width:59.4px;height:12.3px;background:#fff"></div>
  <div class="a" style="left:541.3px;top:280.6px;width:20.8px;height:11.1px;background:#f7f7f7;border:0.7px solid #cfcfcf;border-radius:1.5px"></div>
  <div class="a" style="left:573.2px;top:280.6px;width:30.6px;height:11.1px;background:#f7f7f7;border:0.7px solid #cfcfcf;border-radius:1.5px"></div>
  <div class="t" style="left:502.6px;top:142px;font-size:6.3px;color:#555;transform:scaleX(0.83);transform-origin:left">EXTRUDE</div>
  <div class="t pp" style="left:495.2px;top:154.3px">Type</div>
  <div class="t pp" style="left:495.2px;top:169.2px">Profiles</div>
  <div class="t pp" style="left:495.2px;top:184.5px">Start</div>
  <div class="t pp" style="left:495.2px;top:199.4px">Direction</div>
  <div class="t pp" style="left:495.2px;top:214.6px">Extent Type</div>
  <div class="t pp" style="left:495.2px;top:229.7px">Distance</div>
  <div class="t pp" style="left:495.2px;top:245.0px">Taper Angle</div>
  <div class="t pp" style="left:495.2px;top:264.7px">Operation</div>
  <div class="t pp" style="left:544.7px;top:169.2px">1 selected</div>
  <div class="t pp" style="left:545.9px;top:184.5px">Profile Plane</div>
  <div class="t pp" style="left:545.9px;top:199.4px">One Side</div>
  <div class="t pp" style="left:545.9px;top:214.6px">Distance</div>
  <div class="t pp" style="left:535.8px;top:229.7px">4.00 mm</div>
  <div class="t pp" style="left:535.8px;top:245.0px">0.0 deg</div>
  <div class="t pp" style="left:546px;top:264.7px">Join</div>
  <div class="t pp" style="left:547.7px;top:282.3px">OK</div>
  <div class="t pp" style="left:579px;top:282.3px">Cancel</div>
  <svg class="a" style="left:0;top:0" width="640" height="300" viewBox="0 0 640 300">
    <rect x="494.6" y="144" width="4" height="0.9" fill="#555"/>
    <path d="M603.5,143.3 L605.5,144.5 L603.5,145.7 M606,143.3 L608,144.5 L606,145.7" stroke="#777" stroke-width="0.5" fill="none"/>
    <!-- type icons -->
    <path d="M536.8,155.5 L538.5,154 L543.8,154 L543.8,159.5 L542,161 L536.8,161 Z" fill="#4f9ae4"/>
    <path d="M536.8,159.5 L542,159.5 L543.8,158 L543.8,159.5 L542,161 L536.8,161 Z" fill="#9a9a9a"/>
    <path d="M550.5,155.5 L552.5,154 L558,154 L557,160 L552,160.5 L550.5,161.2 Z" fill="#4f9ae4"/>
    <path d="M552.5,154 L552,160.5" stroke="#2a6fb8" stroke-width="0.6"/>
    <!-- cursor -->
    <path d="M538.6,169.2 L538.6,176.6 L540.3,175 L541.6,177.8 L542.6,177.3 L541.4,174.6 L543.5,174.4 Z" fill="#fff" stroke="#555" stroke-width="0.5"/>
    <path d="M580.6,171.3 L584,174.7 M584,171.3 L580.6,174.7" stroke="#888" stroke-width="0.6"/>
    <!-- start icon -->
    <rect x="537.1" y="184.6" width="1" height="7.4" fill="#2a5a9a"/>
    <rect x="540.5" y="187.8" width="1.2" height="1.2" fill="#333"/>
    <!-- dropdown arrows -->
    <g fill="#555">
      <path d="M589.2,187.6 L591.8,187.6 L590.5,189.2 Z"/>
      <path d="M589.2,202.6 L591.8,202.6 L590.5,204.2 Z"/>
      <path d="M589.2,217.6 L591.8,217.6 L590.5,219.2 Z"/>
      <path d="M589.2,268.2 L591.8,268.2 L590.5,269.8 Z"/>
    </g>
    <!-- direction icon -->
    <path d="M536.2,207.5 L541.5,201" stroke="#444" stroke-width="0.8"/>
    <path d="M538.8,199.8 L543,199.6 L541.5,201.8 L543.2,203.6 L539.8,203.4 Z" fill="#e8783a"/>
    <!-- extent icon -->
    <path d="M536.8,214.8 L536.8,221.8 M541.8,214.8 L541.8,221.8" stroke="#2a5a9a" stroke-width="0.9"/><path d="M537.2,218.3 L541.4,218.3" stroke="#555" stroke-width="0.5"/>
    <!-- join icon -->
    <path d="M536.1,268.5 L538,266.4 L541,266.4 L542.9,268.5 L542.9,272.3 L536.1,272.3 Z" fill="#4f9ae4"/>
    <path d="M538,266.4 L541,266.4 L541,268.5 L538,268.5 Z" fill="#79b5ee"/>
    <!-- info -->
    <circle cx="498.6" cy="286.2" r="3.3" fill="#8d8d8d"/>
    <rect x="498.1" y="285.3" width="1" height="2.8" fill="#f3f3f3"/>
    <rect x="498.1" y="283.7" width="1" height="0.9" fill="#f3f3f3"/>
  </svg>

  <!-- BOTTOM -->
  <div class="a" style="left:28px;top:344px;width:147px;height:12.6px;background:#efefef;border-top:0.5px solid #e4e4e4"></div>
  <div class="t" style="left:42.9px;top:347.8px;font-size:6.3px;color:#4a4a4a;-webkit-text-stroke:0.1px #4a4a4a;transform:scaleX(0.91);transform-origin:left">COMMENTS</div>
  <div class="t" style="left:507.6px;top:349.1px;font-size:6.4px;color:#333;-webkit-text-stroke:0.2px #333;transform:scaleX(0.94);transform-origin:left">1 Profile | Area : 122.718 mm^2</div>
  <div class="a" style="left:28px;top:357px;width:585px;height:26px;background:#f3f3f3"></div>
  <svg class="a" style="left:0;top:0" width="640" height="419" viewBox="0 0 640 419">
    <path d="M165.3,350.3 L169.3,350.3 M167.3,348.3 L167.3,352.3" stroke="#666" stroke-width="0.8"/>
    <!-- nav toolbar -->
    <rect x="261.5" y="342.8" width="122" height="14.2" fill="#f8f8f8"/>
    <line x1="368" y1="354.7" x2="382" y2="358" stroke="#eab0b0" stroke-width="0.6"/>
    <g fill="none" stroke="#666" stroke-width="0.6">
      <ellipse cx="267.3" cy="349.2" rx="3.6" ry="1.8"/>
      <path d="M296.5,352 Q293.8,350 294,347 L294.8,346.5 L295.5,349 L295.5,345.5 L296.5,345.5 L296.6,348.5 L297.3,345.8 L298.2,346 L298,349 L299,347.5 L299.5,348.3 Q298.5,352 296.5,352 Z"/>
      <circle cx="308.2" cy="349.3" r="2.4"/>
      <path d="M309.9,351 L311.8,352.9"/>
      <rect x="318.9" y="345.8" width="6.7" height="6.7" rx="0.6"/>
      <circle cx="322" cy="349" r="2.4"/>
      <rect x="350.2" y="345.6" width="6" height="6.8"/>
      <path d="M350.2,347.9 L356.2,347.9 M350.2,350.2 L356.2,350.2 M352.2,345.6 L352.2,352.4 M354.2,345.6 L354.2,352.4"/>
      <rect x="366.2" y="345.6" width="6.6" height="6.8"/>
      <path d="M366.2,349 L372.8,349 M369.5,345.6 L369.5,352.4"/>
    </g>
    <path d="M267.3,345.3 L267.3,353.3" stroke="#3a8ee0" stroke-width="0.8"/>
    <rect x="281" y="346.5" width="6" height="5.5" fill="#4f9ae4"/>
    <rect x="281" y="346.5" width="6" height="1.3" fill="#555"/>
    <path d="M310.5,346 L313,346 M311.7,344.8 L311.7,347.2" stroke="#666" stroke-width="0.5"/>
    <rect x="334.5" y="346" width="7.4" height="5" fill="#888"/>
    <rect x="336.8" y="351.4" width="2.8" height="1" fill="#888"/>
    <g fill="#666">
      <path d="M274.6,348.6 L276.6,348.6 L275.6,349.8 Z"/>
      <path d="M329.2,348.6 L331.2,348.6 L330.2,349.8 Z"/>
      <path d="M344.6,348.6 L346.6,348.6 L345.6,349.8 Z"/>
      <path d="M359.7,348.6 L361.7,348.6 L360.7,349.8 Z"/>
      <path d="M374.3,348.6 L376.3,348.6 L375.3,349.8 Z"/>
    </g>
    <!-- status icon -->
    <circle cx="602" cy="351.5" r="3.5" fill="#222"/>
    <path d="M599.8,352.5 Q602,348.8 604.3,352.5" fill="none" stroke="#eee" stroke-width="0.6"/>
    <!-- timeline controls -->
    <g fill="#707070">
      <rect x="33.6" y="368.6" width="1" height="5.8"/><path d="M39.4,368.6 L35,371.5 L39.4,374.4 Z"/>
      <path d="M50,368.6 L45.6,371.5 L50,374.4 Z"/><rect x="49.8" y="370.8" width="1.8" height="1.4"/>
      <path d="M58.4,368 L63.8,371.5 L58.4,375 Z"/>
      <path d="M71.4,368.6 L75.8,371.5 L71.4,374.4 Z"/><rect x="69.8" y="370.8" width="1.8" height="1.4"/>
      <path d="M82.2,368.6 L86.6,371.5 L82.2,374.4 Z"/><rect x="86.8" y="368.6" width="1" height="5.8"/>
    </g>
    <rect x="99" y="367.8" width="6.5" height="6.5" fill="#fff" stroke="#4f9ae4" stroke-width="0.6" stroke-dasharray="1,0.6"/>
    <path d="M102.5,373.8 L106,370" stroke="#e69020" stroke-width="1"/>
    <path d="M110.8,369 L112.5,367.5 L117,367.5 L117,372.5 L115.3,374 L110.8,374 Z" fill="#4f9ae4"/>
    <path d="M117.8,367.5 L117.8,374" stroke="#444" stroke-width="0.5"/>
    <rect x="120.5" y="365.5" width="10" height="10" fill="#7cc0ee"/>
    <rect x="122" y="367.5" width="6.5" height="6.5" fill="none" stroke="#333" stroke-width="0.5" stroke-dasharray="1,0.6"/>
    <path d="M125.5,373.5 L129,370" stroke="#e69020" stroke-width="1"/>
    <path d="M129.2,363.4 L135.2,363.4 L132.2,367 Z" fill="#222"/>
    <rect x="131.5" y="365" width="1.4" height="13.5" fill="#222"/>
    <path d="M99,377.6 L130,377.6 M100,376 L100,377.6 M114,376 L114,377.6 M125.5,376 L125.5,377.6" stroke="#c0c0c0" stroke-width="0.5"/>
    <!-- gear -->
    <g transform="translate(602,372)">
      <circle r="3" fill="none" stroke="#777" stroke-width="1.4"/>
      <path d="M0,-4.3 L0,4.3 M-4.3,0 L4.3,0 M-3,-3 L3,3 M3,-3 L-3,3" stroke="#777" stroke-width="1.1"/>
      <circle r="1.5" fill="#f3f3f3"/>
    </g>
  </svg>
  <div class="t" style="left:105.1px;top:317px;font-size:15.55px;font-weight:bold;color:#e9744d">Extrude the circle</div>
</div></div>
</body></html>
